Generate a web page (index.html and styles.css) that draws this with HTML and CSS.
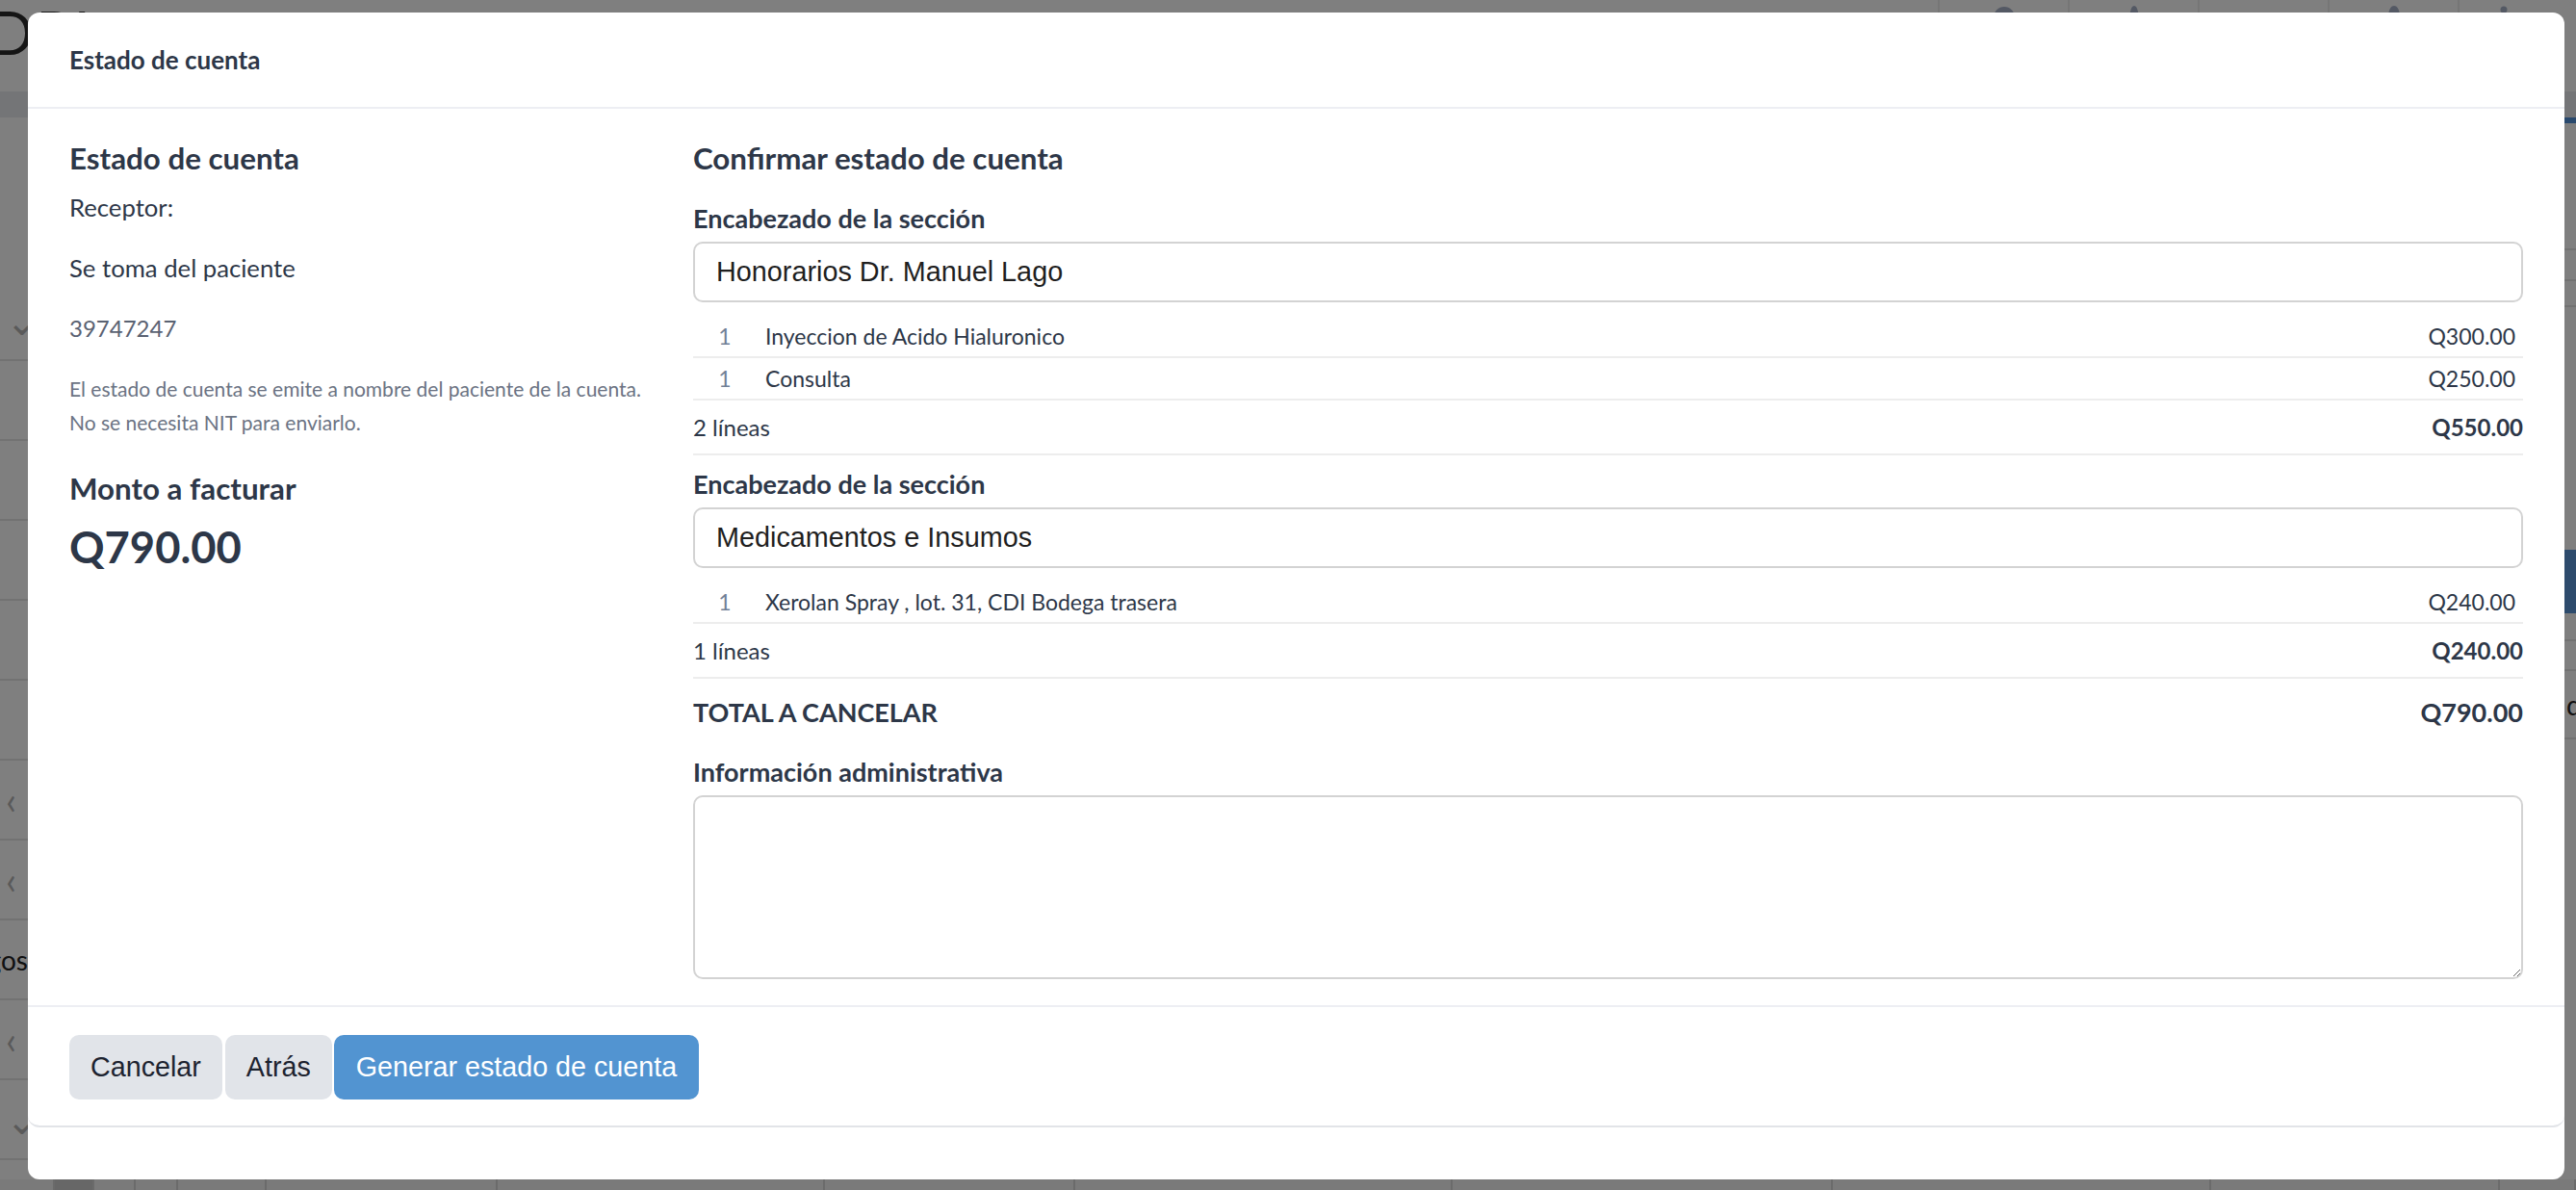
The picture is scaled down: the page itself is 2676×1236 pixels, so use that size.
FILE: index.html
```html
<!DOCTYPE html>
<html lang="es">
<head>
<meta charset="utf-8">
<title>Estado de cuenta</title>
<link rel="stylesheet" href="styles.css">
</head>
<body>
<div class="page">
  <div class="topbar">
    <div class="brand">DPI</div>
    <div class="top-actions">
      <div class="top-cell"><svg class="top-icon" viewBox="0 0 40 40"><circle cx="20" cy="14" r="11"/><path d="M4 40c2-10 8-14 16-14s14 4 16 14z"/></svg></div>
      <div class="top-cell"><svg class="top-icon" viewBox="0 0 40 40"><path d="M20 2c-2 0-3 2-4 6-1 5-1 10-3 14-2 4-5 6-5 8h24c0-2-3-4-5-8-2-4-2-9-3-14-1-4-2-6-4-6z"/></svg></div>
      <div class="top-cell"><svg class="top-icon low" viewBox="0 0 40 40"><circle cx="20" cy="16" r="10"/></svg></div>
      <div class="top-cell"><svg class="top-icon" viewBox="0 0 40 40"><path d="M20 2c-3 0-5 3-6 9-1 6-1 12-4 16h20c-3-4-3-10-4-16-1-6-3-9-6-9z"/></svg></div>
      <div class="top-cell last"><svg class="top-icon" viewBox="0 0 40 40"><circle cx="20" cy="6" r="3.5"/><path d="M20 9v10" stroke="#a9b3c9" stroke-width="3" fill="none"/></svg></div>
    </div>
  </div>
  <div class="band"></div>
  <div class="content">
    <nav class="sidebar">
      <div class="side-spacer"></div>
      <div class="side-row"><span class="chev">&#8964;</span></div>
      <div class="side-row"></div>
      <div class="side-row"></div>
      <div class="side-row"></div>
      <div class="side-row"></div>
      <div class="side-row"></div>
      <div class="side-row"><span class="chev">&lsaquo;</span></div>
      <div class="side-row"><span class="chev">&lsaquo;</span></div>
      <div class="side-row label-row"><span class="side-label">Cargos</span></div>
      <div class="side-row"><span class="chev">&lsaquo;</span></div>
      <div class="side-row"><span class="chev">&#8964;</span></div>
    </nav>
    <main class="main">
      <div class="tab-line"></div>
      <div class="main-row r1"></div>
      <div class="main-row r2"></div>
      <div class="main-row r3"></div>
      <div class="main-gap"></div>
      <div class="main-button"></div>
      <div class="main-row r4"></div>
      <div class="main-row r5"></div>
      <div class="main-row r6"><span>de</span></div>
    </main>
  </div>
  <div class="table-foot">
    <span style="width:57px"></span><span class="dark" style="width:41px"></span><span style="width:43px"></span><span style="width:44px"></span><span style="width:92px"></span><span style="width:240px"></span><span style="width:340px"></span><span style="width:260px"></span><span style="width:392px"></span><span style="width:395px"></span><span style="width:393px"></span><span style="width:300px"></span><span style="width:79px"></span>
  </div>
</div>

<div class="backdrop"></div>

<div class="modal" role="dialog" aria-labelledby="modal-title">
  <div class="modal-header">
    <h2 class="modal-title" id="modal-title">Estado de cuenta</h2>
  </div>

  <div class="modal-body">
    <div class="info-col">
      <h3 class="col-title">Estado de cuenta</h3>
      <p class="receptor">Receptor:</p>
      <p class="receptor-name">Se toma del paciente</p>
      <p class="receptor-id">39747247</p>
      <p class="note">El estado de cuenta se emite a nombre del paciente de la cuenta.<br>No se necesita NIT para enviarlo.</p>
      <h3 class="col-title amount-title">Monto a facturar</h3>
      <p class="amount-big">Q790.00</p>
    </div>

    <div class="confirm-col">
      <h3 class="col-title">Confirmar estado de cuenta</h3>

      <div class="section">
        <label class="field-label">Encabezado de la sección</label>
        <input class="field-input" type="text" value="Honorarios Dr. Manuel Lago">
        <ul class="lines">
          <li class="line"><span class="qty">1</span><span class="desc">Inyeccion de Acido Hialuronico</span><span class="price">Q300.00</span></li>
          <li class="line"><span class="qty">1</span><span class="desc">Consulta</span><span class="price">Q250.00</span></li>
        </ul>
        <div class="subtotal"><span>2 líneas</span><strong>Q550.00</strong></div>
      </div>

      <div class="section next">
        <label class="field-label">Encabezado de la sección</label>
        <input class="field-input" type="text" value="Medicamentos e Insumos">
        <ul class="lines">
          <li class="line"><span class="qty">1</span><span class="desc">Xerolan Spray , lot. 31, CDI Bodega trasera</span><span class="price">Q240.00</span></li>
        </ul>
        <div class="subtotal"><span>1 líneas</span><strong>Q240.00</strong></div>
      </div>

      <div class="grand-total"><span>TOTAL A CANCELAR</span><span>Q790.00</span></div>

      <label class="field-label admin-label">Información administrativa</label>
      <textarea class="field-textarea"></textarea>
    </div>
  </div>

  <div class="modal-footer">
    <button class="btn btn-light" type="button">Cancelar</button>
    <button class="btn btn-light btn-back" type="button">Atrás</button>
    <button class="btn btn-primary" type="button">Generar estado de cuenta</button>
  </div>
</div>
</body>
</html>
```

FILE: styles.css
```css
* {
  box-sizing: border-box;
}

html,
body {
  margin: 0;
  padding: 0;
}

body {
  width: 2676px;
  height: 1236px;
  overflow: hidden;
  position: relative;
  background: #ffffff;
  font-family: Lato, "Noto Sans", sans-serif;
  color: #2d3748;
}

/* ---------- page behind the dialog ---------- */

.page {
  display: flex;
  flex-direction: column;
  height: 1236px;
}

.topbar {
  height: 95px;
  display: flex;
  justify-content: space-between;
  align-items: flex-start;
  flex: none;
}

.brand {
  margin-left: -12px;
  margin-top: -2px;
  font-size: 62px;
  line-height: 70px;
  color: #2b2b2b;
  letter-spacing: 2px;
}

.top-actions {
  display: flex;
  height: 95px;
}

.top-cell {
  width: 135px;
  height: 95px;
  border-left: 2px solid #ececec;
  display: flex;
  justify-content: center;
  padding-top: 4px;
}

.top-cell.last {
  width: 123px;
  padding-right: 30px;
}

.top-icon {
  width: 40px;
  height: 40px;
  fill: #a9b3c9;
}

.top-icon.low {
  margin-top: 6px;
}

.band {
  height: 27px;
  background: #e9ebef;
  flex: none;
}

.content {
  display: flex;
  height: 1103px;
  flex: none;
}

.sidebar {
  width: 60px;
  flex: none;
  display: flex;
  flex-direction: column;
}

.side-spacer {
  height: 170px;
}

.side-row {
  height: 83px;
  border-bottom: 2px solid #e4e4e4;
  display: flex;
  align-items: center;
  padding-left: 6px;
}

.chev {
  font-size: 40px;
  line-height: 40px;
  color: #b4b4b4;
}

.label-row {
  width: 29px;
  justify-content: flex-end;
  padding-left: 0;
}

.side-label {
  font-size: 28px;
  white-space: nowrap;
  color: #222;
}

.main {
  flex: 1;
  display: flex;
  flex-direction: column;
}

.tab-line {
  height: 6px;
  background: #5392da;
}

.main-row {
  border-bottom: 2px solid #e4e4e4;
}

.main-row.r1 { height: 132px; }
.main-row.r2 { height: 32px; }
.main-row.r3 { height: 27px; }

.main-gap {
  height: 252px;
}

.main-button {
  height: 66px;
  background: #5a96d8;
}

.main-row.r4 { height: 29px; }
.main-row.r5 { height: 31px; }

/* row label that starts just right of the dialog edge */
.main-row.r6 {
  height: 71px;
  display: flex;
  align-items: center;
  padding-left: 2606px;
  font-size: 28px;
  color: #222;
  white-space: nowrap;
}

.table-foot {
  display: flex;
  flex: 1;
  background: #f4f4f4;
}

.table-foot span {
  height: 100%;
  border-right: 2px solid #d6d6d6;
  flex: none;
}

.table-foot span.dark {
  background: #cfcfcf;
}

.backdrop {
  position: absolute;
  inset: 0;
  background: rgba(0, 0, 0, 0.5);
}

/* ---------- dialog ---------- */

.modal {
  position: absolute;
  left: 29px;
  top: 13px;
  width: 2635px;
  height: 1212px;
  background: #ffffff;
  border-radius: 12px;
  display: flex;
  flex-direction: column;
}

.modal-header {
  height: 100px;
  border-bottom: 2px solid #edeef3;
  padding: 0 43px;
  display: flex;
  align-items: center;
  flex: none;
}

.modal-title {
  margin: 0;
  font-size: 26px;
  line-height: 34px;
  font-weight: 700;
  color: #2d3748;
}

.modal-body {
  display: grid;
  grid-template-columns: 608px 1fr;
  column-gap: 40px;
  padding: 31px 43px 27px;
  flex: none;
}

.col-title {
  margin: 0;
  font-size: 31.3px;
  line-height: 40px;
  font-weight: 700;
  color: #2d3748;
}

.info-col p {
  margin: 0;
}

.receptor {
  margin-top: 13px !important;
  font-size: 25.7px;
  line-height: 36px;
}

.receptor-name {
  margin-top: 27px !important;
  font-size: 25.7px;
  line-height: 36px;
}

.receptor-id {
  margin-top: 27px !important;
  font-size: 24px;
  line-height: 36px;
  color: #5a6272;
}

.note {
  margin-top: 27px !important;
  font-size: 21px;
  line-height: 35px;
  color: #6b7383;
}

.amount-title {
  margin-top: 31px;
}

.amount-big {
  margin-top: 13px !important;
  font-size: 45.3px;
  line-height: 56px;
  font-weight: 700;
  color: #2d3748;
}

.confirm-col {
  display: flex;
  flex-direction: column;
  min-width: 0;
}

.section {
  display: flex;
  flex-direction: column;
  margin-top: 26px;
}

.section.next {
  margin-top: 13px;
}

.field-label {
  font-size: 27px;
  line-height: 34px;
  font-weight: 700;
  color: #2d3748;
}

.field-input {
  margin-top: 7px;
  height: 63px;
  width: 100%;
  border: 2px solid #d3d3d3;
  border-radius: 10px;
  padding: 0 22px;
  font-family: "Liberation Sans", Arial, sans-serif;
  font-size: 28.8px;
  color: #1f1f1f;
  background: #ffffff;
  outline: none;
}

.lines {
  list-style: none;
  margin: 14px 0 0;
  padding: 0;
}

.line {
  height: 44px;
  border-bottom: 2px solid #ededed;
  display: grid;
  grid-template-columns: 66px 1fr auto;
  align-items: center;
  font-size: 23px;
  color: #2d3748;
}

.qty {
  text-align: center;
  color: #718096;
}

.desc {
  padding-left: 9px;
}

.price {
  padding-right: 8px;
}

.subtotal {
  height: 57px;
  border-bottom: 2px solid #ededed;
  display: flex;
  justify-content: space-between;
  align-items: center;
  font-size: 24px;
  color: #2d3748;
}

.subtotal strong {
  font-weight: 700;
}

.grand-total {
  height: 68px;
  display: flex;
  justify-content: space-between;
  align-items: center;
  font-size: 27px;
  font-weight: 700;
  color: #2d3748;
}

.admin-label {
  margin-top: 12px;
}

.field-textarea {
  margin-top: 7px;
  height: 191px;
  width: 100%;
  border: 2px solid #d3d3d3;
  border-radius: 10px;
  padding: 12px 22px;
  font-family: "Liberation Sans", Arial, sans-serif;
  font-size: 28px;
  resize: vertical;
  outline: none;
}

.modal-footer {
  border-top: 2px solid #edeef3;
  border-bottom: 2px solid #e2e4e8;
  border-radius: 0 0 12px 12px;
  padding: 29px 43px 27px;
  display: flex;
  align-items: center;
  flex: none;
}

.btn {
  height: 67px;
  border: 0;
  border-radius: 10px;
  padding: 0 22px;
  font-family: "Liberation Sans", Arial, sans-serif;
  font-size: 28.7px;
  cursor: pointer;
}

.btn-back {
  margin-left: 3px;
}

.btn-light {
  background: #e1e4e9;
  color: #1d2330;
}

.btn-primary {
  margin-left: 2px;
  background: #5294d1;
  color: #ffffff;
  padding: 0 23px;
}
```
